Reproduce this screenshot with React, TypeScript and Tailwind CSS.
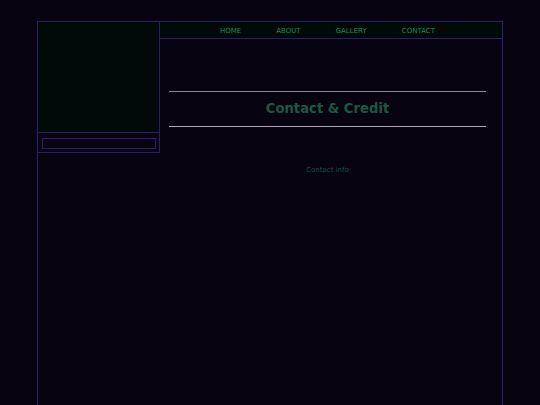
export default function App() {
  const links = ["HOME", "ABOUT", "GALLERY", "CONTACT"];
  return (
    <div
      className="min-h-screen w-full bg-[#080310] pt-[21px]"
      style={{ fontFamily: '"DejaVu Sans", Verdana, sans-serif' }}
    >
      <div className="ml-[37px] flex min-h-[400px] w-[466px] items-start border-x border-t border-[#2b1e6b]">
        <aside className="w-[122px] shrink-0 border-r border-b border-[#2b1e6b]">
          <div className="h-[111px] border-b border-[#2b1e6b] bg-[#010a08]" />
          <div className="pt-[5px] pb-[3px] pl-[4px] pr-[3px]">
            <div className="h-[11px] border border-[#2b1e6b] bg-[#080310]" />
          </div>
        </aside>
        <main className="flex-1">
          <nav className="flex h-[17px] items-center justify-center border-b border-[#2b1e6b] bg-[#010a08] pr-[7px] pt-[2px]">
            {links.map((l) => (
              <span key={l} className="px-[17.5px] text-[7px] leading-[8px] text-[#1f8a5c]">
                {l}
              </span>
            ))}
          </nav>
          <div className="pr-[7px]">
            <div className="mx-[9px] mt-[52px] h-px bg-[#8c8696]" />
            <div className="flex h-[34px] items-center justify-center text-[13.2px] font-bold text-[#1a5843]">
              Contact &amp; Credit
            </div>
            <div className="mx-[9px] h-px bg-[#aea8ba]" />
            <div className="mt-[38px] text-center text-[7px] leading-[10px] text-[#1a5050]">
              Contact info
            </div>
          </div>
        </main>
      </div>
    </div>
  );
}
